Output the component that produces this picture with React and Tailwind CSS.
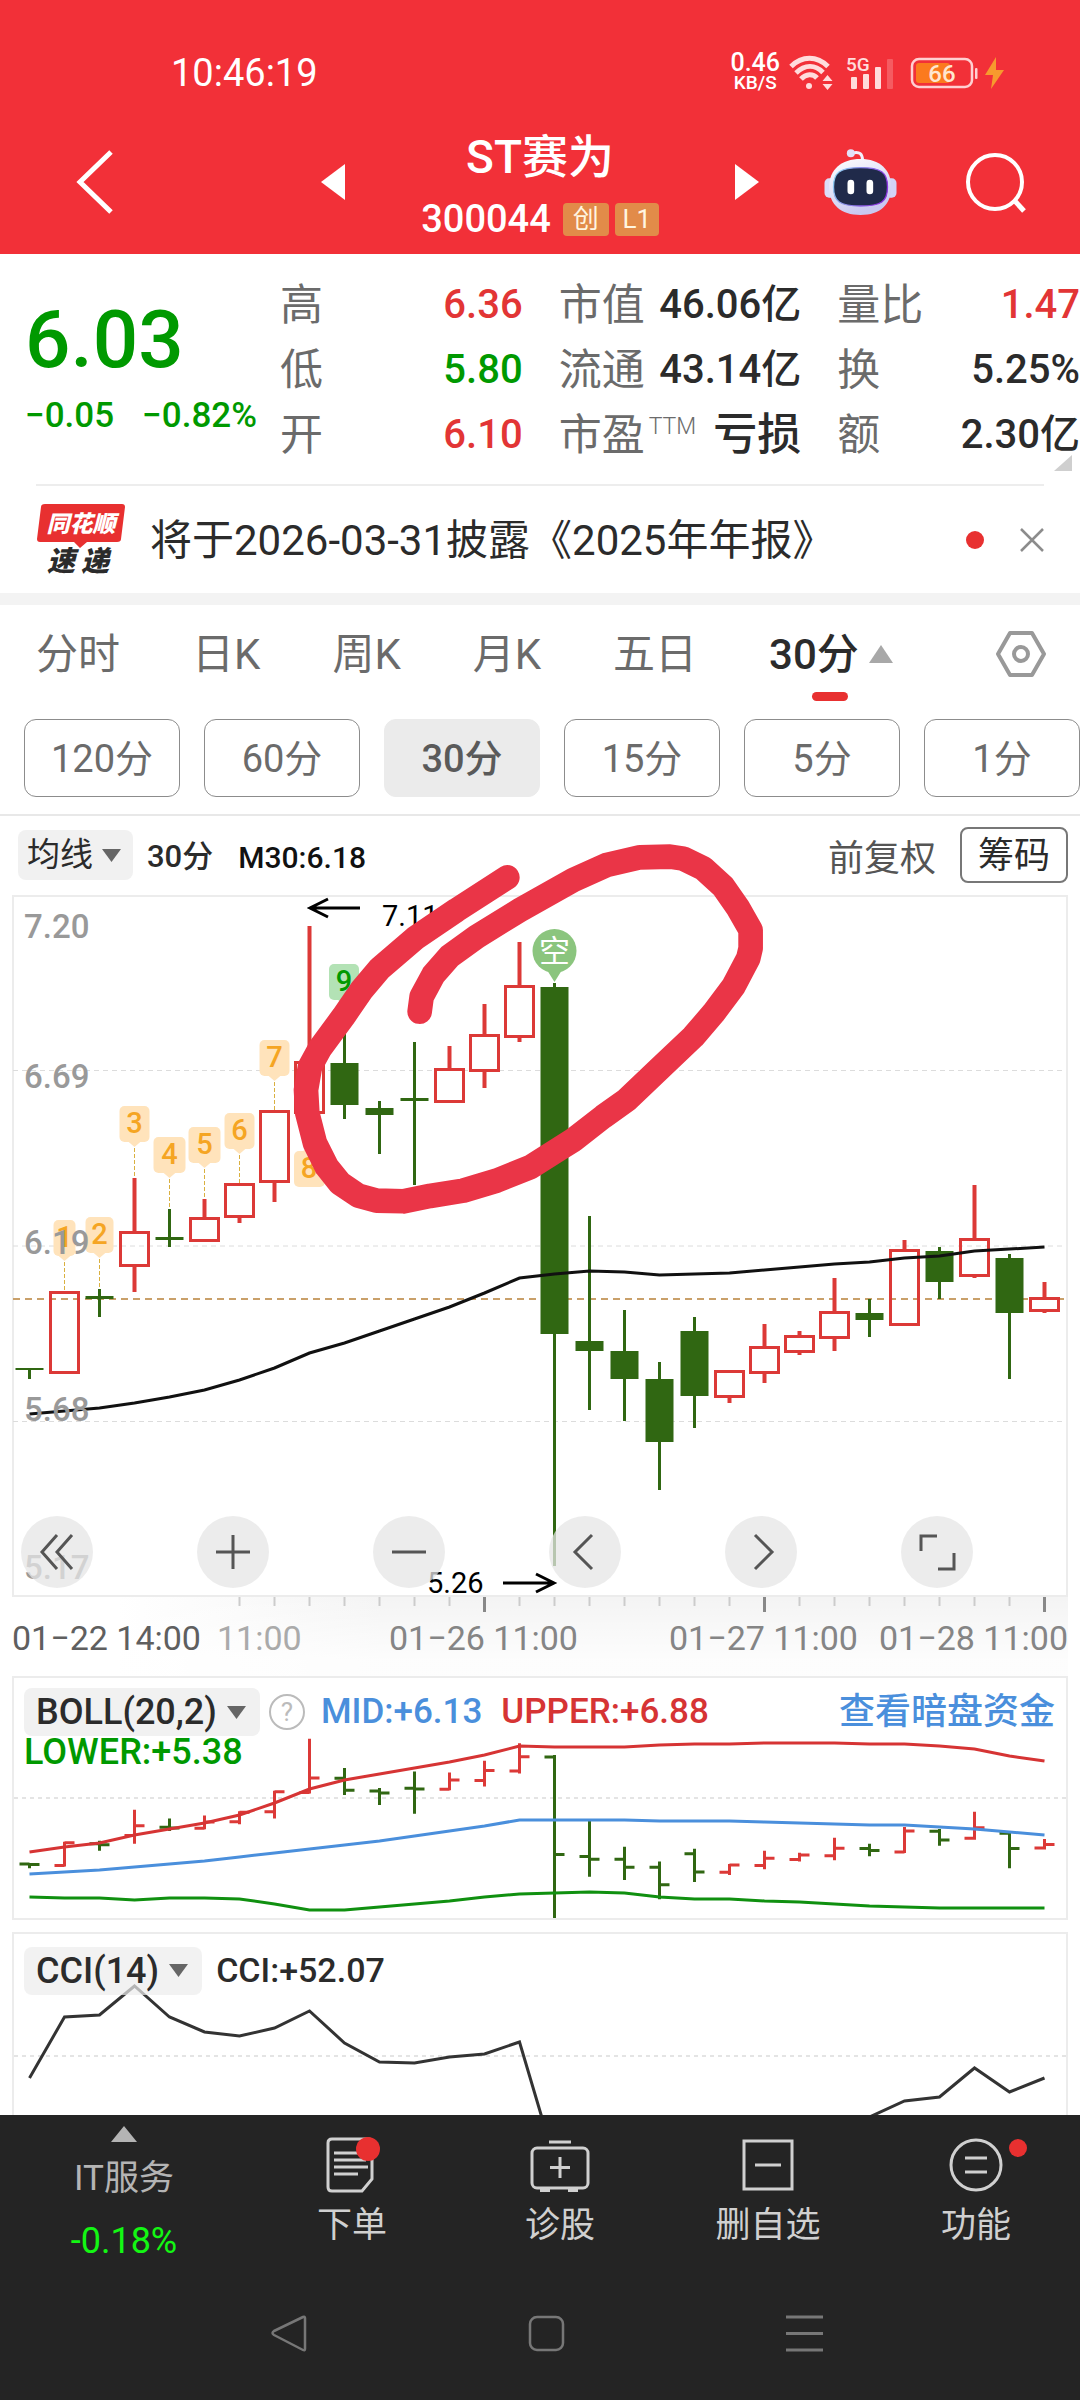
import { clsx } from 'clsx';

const STEP = 35;
const X0 = 29.5;

// [top, bottom, high, low, up] in chart units
const candles = [
  [1368, 1370, 1368, 1379, 0],
  [1292, 1373, 1292, 1373, 1],
  [1296, 1299, 1289, 1317, 0],
  [1232, 1266, 1178, 1292, 1],
  [1237, 1240, 1209, 1247, 0],
  [1218, 1241, 1199, 1241, 1],
  [1184, 1217, 1184, 1223, 1],
  [1111, 1182, 1111, 1202, 1],
  [1062, 1113, 926, 1113, 1],
  [1063, 1105, 1030, 1119, 0],
  [1108, 1115, 1101, 1154, 0],
  [1098, 1101, 1042, 1185, 0],
  [1069, 1102, 1046, 1102, 1],
  [1035, 1071, 1004, 1088, 1],
  [986, 1037, 942, 1042, 1],
  [987, 1334, 983, 1566, 0],
  [1341, 1351, 1216, 1410, 0],
  [1351, 1379, 1310, 1421, 0],
  [1379, 1442, 1362, 1490, 0],
  [1331, 1396, 1317, 1428, 0],
  [1371, 1397, 1371, 1403, 1],
  [1347, 1373, 1324, 1383, 1],
  [1336, 1352, 1331, 1355, 1],
  [1312, 1338, 1278, 1351, 1],
  [1313, 1320, 1299, 1337, 0],
  [1250, 1325, 1240, 1325, 1],
  [1251, 1282, 1247, 1299, 0],
  [1239, 1276, 1185, 1278, 1],
  [1258, 1313, 1254, 1379, 0],
  [1298, 1311, 1282, 1313, 1],
];

const ma30 = [
  1414, 1411, 1408, 1403, 1397, 1390, 1380, 1368, 1353, 1343, 1331, 1319, 1307, 1293, 1278, 1274,
  1271, 1272, 1275, 1274, 1273, 1270, 1267, 1264, 1262, 1258, 1256, 1251, 1249, 1247,
];

const bollUpper = [
  1852, 1847, 1843, 1835, 1829, 1823, 1815, 1803, 1789, 1780, 1774, 1768, 1762, 1755, 1746, 1747,
  1747, 1747, 1745, 1744, 1744, 1743, 1743, 1743, 1744, 1744, 1746, 1749, 1756, 1761,
];
const bollMid = [
  1874, 1872, 1870, 1867, 1864, 1861, 1857, 1853, 1849, 1845, 1841, 1836, 1831, 1826, 1820, 1820,
  1820, 1820, 1821, 1821, 1821, 1822, 1823, 1824, 1825, 1825, 1827, 1829, 1832, 1835,
];
const bollLower = [
  1897, 1898, 1898, 1900, 1898, 1898, 1899, 1904, 1910, 1910, 1907, 1904, 1901, 1897, 1894, 1893,
  1892, 1893, 1897, 1899, 1899, 1901, 1902, 1904, 1906, 1907, 1908, 1908, 1908, 1908,
];
const cci = [
  2078, 2017, 2015, 1986, 2017, 2032, 2036, 2028, 2011, 2043, 2062, 2063, 2057, 2054, 2042, 2160,
  2240, 2240, 2240, 2230, 2210, 2190, 2160, 2135, 2117, 2101, 2097, 2068, 2092, 2078,
];

// [candle index, label, top, width, stem end]
const tags = [
  [1, '1', 1220, 22, 1292],
  [2, '2', 1217, 28, 1289],
  [3, '3', 1106, 30, 1178],
  [4, '4', 1137, 32, 1209],
  [5, '5', 1127, 32, 1199],
  [6, '6', 1113, 30, 1184],
  [7, '7', 1040, 30, 1111],
];

const stats = [
  [
    { label: '高', value: '6.36', color: 'text-[#e23535]' },
    { label: '低', value: '5.80', color: 'text-[#009900]' },
    { label: '开', value: '6.10', color: 'text-[#e23535]' },
  ],
  [
    { label: '市值', value: '46.06亿', color: 'text-[#2b2b2b]' },
    { label: '流通', value: '43.14亿', color: 'text-[#2b2b2b]' },
    { label: '市盈', sup: 'TTM', value: '亏损', color: 'text-[#2b2b2b]' },
  ],
  [
    { label: '量比', value: '1.47', color: 'text-[#e23535]' },
    { label: '换', value: '5.25%', color: 'text-[#2b2b2b]' },
    { label: '额', value: '2.30亿', color: 'text-[#2b2b2b]' },
  ],
];

const tabs = ['分时', '日K', '周K', '月K', '五日', '30分'];
const periods = ['120分', '60分', '30分', '15分', '5分', '1分'];

const xAt = (i) => X0 + i * STEP;
const toPoints = (values) => values.map((y, i) => `${xAt(i)},${y}`).join(' ');
const bollY = (y) => 1757 + (y - 987) * 0.281;

function StatusBar() {
  return (
    <div className="flex h-[110px] items-center justify-between pt-[36px] pr-[74px] pb-0 pl-[171px]">
      <span className="text-[38px] leading-[44px]">10:46:19</span>
      <div className="flex items-center">
        <div className="mr-2 flex flex-col items-center font-medium">
          <span className="text-[25px] leading-[20px]">0.46</span>
          <span className="text-[19px] leading-[20px]">KB/S</span>
        </div>
        <svg className="mr-3 h-[36px] w-[46px]" viewBox="0 0 46 36" fill="none" stroke="#ffdcdc">
          <path d="M3 11.500C14 .5 29 .5 40 11.500" strokeWidth="5" />
          <path d="M8 18C17 9.500 27 9.500 35 17.500" strokeWidth="5" />
          <path d="M13 24C18 18.500 25 18.500 29 23" strokeWidth="5" />
          <circle cx="21" cy="31" r="3" fill="#ffdcdc" stroke="none" />
          <path d="M34.500 26l5-6 5 6zM34.500 29l5 6 5-6z" fill="#ffdcdc" stroke="none" />
        </svg>
        <svg className="mr-4 h-[36px] w-[48px] overflow-visible" viewBox="0 0 48 36" fill="#ffdcdc">
          <text x="0" y="16" fontSize="19" fontWeight="500">5G</text>
          <rect x="5" y="22" width="6" height="12" rx="1" />
          <rect x="17" y="19" width="6" height="15" rx="1" />
          <rect x="29" y="12" width="6" height="22" rx="1" />
          <rect x="41" y="4" width="6" height="30" rx="1" opacity="0.25" />
        </svg>
        <svg className="h-[36px] w-[96px]" viewBox="0 0 96 36">
          <rect x="2" y="4" width="60" height="28" rx="7" fill="none" stroke="#ffd0d2" strokeWidth="2.500" />
          <rect x="6" y="8" width="34" height="20" rx="3" fill="#fb7a1e" />
          <rect x="65" y="13" width="2.500" height="11" rx="1" fill="#ffd0d2" />
          <text x="32" y="27" textAnchor="middle" fontSize="24" fontWeight="500" fill="#ffe6cf">66</text>
          <path d="M86 2L75 20h8l-2 14 13-19h-8z" fill="#f79a2e" />
        </svg>
      </div>
    </div>
  );
}

function RobotIcon() {
  return (
    <svg className="h-[66px] w-[73px]" viewBox="0 0 216 198">
      <defs>
        <linearGradient id="shell" x1="0" y1="0" x2="0.4" y2="1">
          <stop offset="0" stopColor="#ffffff" />
          <stop offset="1" stopColor="#c9c8f0" />
        </linearGradient>
        <linearGradient id="rim" x1="0" y1="0" x2="1" y2="0.3">
          <stop offset="0" stopColor="#8fdcf4" />
          <stop offset="1" stopColor="#8a35e0" />
        </linearGradient>
      </defs>
      <path d="M84 12c22-6 30 4 30 22" fill="none" stroke="#f3f0fc" strokeWidth="9" />
      <circle cx="79" cy="13" r="12" fill="#e3e0f8" />
      <rect x="0" y="88" width="34" height="58" rx="14" fill="#dcdcf8" />
      <rect x="182" y="88" width="34" height="58" rx="14" fill="#d3d3f6" />
      <path d="M108 30c58 0 92 32 92 84s-32 84-92 84-94-32-94-84 36-84 94-84z" fill="url(#shell)" />
      <path d="M108 56c62 0 81 14 81 58s-19 57-81 57-81-13-81-57 19-58 81-58z" fill="#202a4a" stroke="url(#rim)" strokeWidth="4" />
      <rect x="69" y="92" width="20" height="44" rx="10" fill="#fff" />
      <rect x="126" y="92" width="20" height="44" rx="10" fill="#fff" />
    </svg>
  );
}

function Header() {
  return (
    <header className="bg-[#f23038] text-white">
      <StatusBar />
      <div className="grid h-[144px] grid-cols-[1fr_auto_1fr] items-center">
        <div className="flex items-center justify-between pr-[76px] pl-[76px]">
          <button aria-label="返回">
            <svg className="h-[66px] w-[38px]" viewBox="0 0 38 66" fill="none" stroke="#fff" strokeWidth="5">
              <path d="M35 3L4 33l31 30" />
            </svg>
          </button>
          <button aria-label="上一只">
            <svg className="h-[36px] w-[24px]" viewBox="0 0 24 36" fill="#fff"><path d="M24 0v36L0 18z" /></svg>
          </button>
        </div>
        <div className="flex flex-col items-center pt-3">
          <h1 className="text-[46px] leading-[62px] font-medium">ST赛为</h1>
          <div className="flex h-[62px] items-center gap-[6px]">
            <span className="mr-[6px] text-[38px] leading-[44px] font-medium">300044</span>
            <span className="flex h-[33px] w-[46px] items-center justify-center rounded-sm bg-[#e28b49] text-[26px] text-[#fff5e0]">创</span>
            <span className="flex h-[33px] w-[44px] items-center justify-center rounded-sm bg-[#e28b49] text-[26px] text-[#fff5e0]">L1</span>
          </div>
        </div>
        <div className="flex items-center pl-[76px]">
          <button aria-label="下一只">
            <svg className="h-[36px] w-[24px]" viewBox="0 0 24 36" fill="#fff"><path d="M0 0v36l24-18z" /></svg>
          </button>
          <button className="ml-[65px]" aria-label="智能助手"><RobotIcon /></button>
          <button className="ml-[68px]" aria-label="搜索">
            <svg className="h-[62px] w-[62px]" viewBox="0 0 62 62" fill="none" stroke="#fff" strokeWidth="4">
              <circle cx="30" cy="31" r="27" />
              <path d="M49 49l10 11" strokeWidth="5" />
            </svg>
          </button>
        </div>
      </div>
    </header>
  );
}

function Quote() {
  return (
    <section className="relative flex h-[230px] pt-[18px]">
      <div className="w-[280px] shrink-0 pt-[24px] pl-[25px] font-medium text-[#009900]">
        <div className="text-[80px] leading-[88px]">6.03</div>
        <div className="mt-[10px] flex gap-[28px] text-[35px] leading-[44px] whitespace-nowrap">
          <span>−0.05</span>
          <span>−0.82%</span>
        </div>
      </div>
      <div className="grid flex-1 grid-cols-3 gap-x-[36px]">
        {stats.map((col, i) => (
          <dl key={i}>
            {col.map((row) => (
              <div key={row.label} className="flex h-[65px] items-center justify-between whitespace-nowrap">
                <dt className="flex text-[43px] leading-[60px] text-[#6b6b6b]">
                  {row.label}
                  {row.sup && <span className="ml-1 text-[23px] leading-[44px] font-light">{row.sup}</span>}
                </dt>
                <dd className={clsx('leading-[60px] font-medium', row.value === '亏损' ? 'text-[44px]' : 'text-[40px]', row.color)}>
                  {row.value}
                </dd>
              </div>
            ))}
          </dl>
        ))}
      </div>
      <svg className="absolute right-2 bottom-[13px] h-4 w-[18px]" viewBox="0 0 18 16" fill="#cfcfcf"><path d="M18 0v16H0z" /></svg>
    </section>
  );
}

function NewsBar() {
  return (
    <section className="mx-9 flex h-[109px] items-center border-t-2 border-[#ededed]">
      <svg className="h-[76px] w-[90px]" viewBox="0 0 90 76" fontStyle="italic" fontWeight="900">
        <path d="M9 2h77q3 0 3 3l-4 32q0 3-4 3H51l-7 6-6-6H4q-3 0-3-3L5 5q0-3 4-3z" fill="#e83030" />
        <text x="45" y="30" textAnchor="middle" fontSize="23" fill="#fff">同花顺</text>
        <text x="11" y="69" fontSize="28" fill="#2b2b2b">速</text>
        <text x="45" y="69" fontSize="28" fill="#2b2b2b">递</text>
      </svg>
      <p className="ml-6 flex-1 pt-[2px] text-[42px] whitespace-nowrap text-[#2b2b2b]">将于2026-03-31披露《2025年年报》</p>
      <span className="mr-9 size-[18px] rounded-full bg-[#e83030]" />
      <button aria-label="关闭">
        <svg className="size-[24px]" viewBox="0 0 24 24" stroke="#8c8c8c" strokeWidth="2.500"><path d="M1 1l22 22M23 1L1 23" /></svg>
      </button>
    </section>
  );
}

function Tabs() {
  return (
    <nav className="border-t-[12px] border-b-2 border-t-[#f3f3f3] border-b-[#e8e8e8]">
      <div className="flex h-[98px] items-center justify-between pr-[34px] pl-9">
        <div className="flex gap-[72px]">
          {tabs.map((tab) => {
            const active = tab === '30分';
            return (
              <button
                key={tab}
                className={clsx(
                  'relative flex h-[98px] items-center text-[42px] whitespace-nowrap',
                  active ? 'font-medium text-[#2b2b2b]' : 'text-[#6b6b6b]'
                )}
              >
                {tab}
                {active && (
                  <>
                    <svg className="ml-[10px] h-[18px] w-[24px]" viewBox="0 0 24 18" fill="#a8a8a8"><path d="M12 0l12 18H0z" /></svg>
                    <span className="absolute bottom-[2px] left-[43px] h-[9px] w-[36px] rounded-full bg-[#e83030]" />
                  </>
                )}
              </button>
            );
          })}
        </div>
        <button aria-label="设置">
          <svg className="h-[48px] w-[50px]" viewBox="0 0 50 48" fill="none" stroke="#999" strokeWidth="4" strokeLinejoin="round">
            <path d="M14 3h22l12 21-12 21H14L2 24z" />
            <circle cx="25" cy="24" r="7" />
          </svg>
        </button>
      </div>
      <div className="flex gap-6 pt-4 pb-[17px] pl-6">
        {periods.map((p) => (
          <button
            key={p}
            className={clsx(
              'h-[78px] min-w-0 flex-1 basis-0 rounded-xl border pt-[2px] text-[38px]',
              p === '30分' ? 'border-[#ebebeb] bg-[#ebebeb] font-medium text-[#5a5a5a]' : 'border-[#8c8c8c] text-[#6b6b6b]'
            )}
          >
            {p}
          </button>
        ))}
      </div>
    </nav>
  );
}

function Caret() {
  return <svg className="h-[13px] w-[19px]" viewBox="0 0 19 13" fill="#666"><path d="M0 0h19l-9.500 13z" /></svg>;
}

function MaBar() {
  return (
    <div className="flex h-[78px] items-center justify-between pr-3 pl-[18px] whitespace-nowrap">
      <div className="flex items-center">
        <button className="flex h-[50px] items-center gap-[9px] rounded-lg bg-[#f1f1f1] pr-3 pl-[9px] text-[33px] text-[#2b2b2b]">
          均线 <Caret />
        </button>
        <span className="ml-[14px] pt-1 text-[31px] font-medium text-[#2b2b2b]">30分</span>
        <span className="ml-[25px] pt-1 text-[30px] font-medium text-[#111]">M30:6.18</span>
      </div>
      <div className="flex items-center gap-6">
        <span className="pt-2 text-[36px] text-[#555]">前复权</span>
        <button className="h-[56px] w-[108px] rounded-lg border-2 border-[#777] text-[36px] leading-[54px] text-[#2b2b2b]">筹码</button>
      </div>
    </div>
  );
}

function Candle({ data, x }) {
  const [top, bottom, high, low, up] = data;
  if (up) {
    return (
      <g stroke="#dc3937" strokeWidth="3" fill="none">
        <path d={`M${x} ${high}V${top}M${x} ${bottom}V${low}`} strokeWidth="4" />
        <rect x={x - 14} y={top + 0.5} width="28" height={bottom - top - 1} />
      </g>
    );
  }
  return (
    <g fill="#306712">
      <rect x={x - 1.5} y={high} width="3" height={low - high} />
      <rect x={x - 14} y={top} width="28" height={bottom - top} />
    </g>
  );
}

function Tag({ x, y, width, label }) {
  return (
    <g>
      <rect x={x - width / 2} y={y} width={width} height="36" rx="5" fill="#ffe3bb" />
      <path d={`M${x - 7} ${y + 35}h14l-7 6z`} fill="#ffe3bb" />
      <text x={x} y={y + 27} textAnchor="middle" fontSize="29" fontWeight="500" fill="#f5a523">{label}</text>
    </g>
  );
}

const controls = [
  { label: '最左', d: 'M36 19L21 36l15 17M51 19L36 36l15 17' },
  { label: '放大', d: 'M36 19v34M19 36h34' },
  { label: '缩小', d: 'M19 36h34' },
  { label: '左移', d: 'M43 19L26 36l17 17' },
  { label: '右移', d: 'M30 19l17 17-17 17' },
  { label: '全屏', d: 'M20 35V20h16M53 37v16H37' },
];

function KChart() {
  return (
    <section className="relative">
      <svg className="block h-auto w-full overflow-visible" viewBox="0 894 1080 782">
        <defs>
          <linearGradient id="axisX">
            <stop offset="0.1" stopColor="#fff" />
            <stop offset="0.35" stopColor="#f4f4f4" />
          </linearGradient>
          <linearGradient id="axisY" x1="0" x2="0" y1="0" y2="1">
            <stop offset="0" stopColor="#fff" stopOpacity="0" />
            <stop offset="0.8" stopColor="#fff" stopOpacity="0.8" />
          </linearGradient>
        </defs>
        <rect x="12" y="1597" width="1056" height="79" fill="url(#axisX)" />
        <rect x="12" y="1597" width="1056" height="79" fill="url(#axisY)" />
        <rect x="13" y="896" width="1054" height="700" fill="none" stroke="#ececec" strokeWidth="2" />
        {[1070.5, 1246, 1421.5].map((y) => (
          <path key={y} d={`M13 ${y}H1066`} stroke="#dcdcdc" strokeDasharray="5 4" />
        ))}
        <path d="M13 1299H1066" stroke="#c9a06a" strokeWidth="2" strokeDasharray="7 5" />

        {tags.map(([i, label, y, width, end]) => (
          <g key={label}>
            <path d={`M${xAt(i)} ${y + 42}V${end}`} stroke="#d9b040" strokeDasharray="4 2" />
            <Tag x={xAt(i)} y={y} width={width} label={label} />
          </g>
        ))}
        <rect x="294" y="1151" width="31" height="36" rx="5" fill="#ffe3bb" />
        <text x="309" y="1178" textAnchor="middle" fontSize="29" fontWeight="500" fill="#f5a523">8</text>
        <path d="M302 1152h14l-7-6z" fill="#ffe3bb" />
        <rect x="329" y="964" width="30" height="36" rx="5" fill="#b3e2b5" />
        <path d="M337 999h14l-7 6z" fill="#b3e2b5" />
        <text x="344" y="991" textAnchor="middle" fontSize="29" fontWeight="500" fill="#009900">9</text>

        {candles.map((c, i) => <Candle key={i} data={c} x={xAt(i)} />)}
        <polyline points={toPoints(ma30)} fill="none" stroke="#111" strokeWidth="3" />

        <path d="M547 970h15l-7.500 12z" fill="#8bc57e" />
        <circle cx="554.500" cy="951" r="22" fill="#8bc57e" />
        <text x="554.500" y="962" textAnchor="middle" fontSize="31" fill="#fff">空</text>

        <g fontSize="33" fontWeight="500" fill="#999">
          <text x="24" y="938">7.20</text>
          <text x="24" y="1088">6.69</text>
          <text x="24" y="1254">6.19</text>
          <text x="24" y="1421">5.68</text>
          <text x="24" y="1579">5.17</text>
        </g>
        <g fontSize="29" fill="#000">
          <text x="382" y="926">7.11</text>
          <text x="427" y="1593">5.26</text>
        </g>
        <g fill="none" stroke="#000" strokeWidth="3">
          <path d="M360 908h-50M328 899l-18 9 18 9" />
          <path d="M503 1583h50M536 1574l18 9-18 9" />
        </g>

        {candles.map((_, i) => {
          if (i < 6) return null;
          const major = [13, 21, 29].includes(i);
          return (
            <path
              key={i}
              d={`M${xAt(i)} 1597v${major ? 15 : 9}`}
              stroke={major ? '#888' : '#ccc'}
              strokeWidth={major ? 3 : 2}
            />
          );
        })}
        <g fontSize="34" fill="#858585">
          <text x="217" y="1650" fill="#aaa">11:00</text>
          <text x="389" y="1650">01−26 11:00</text>
          <text x="669" y="1650">01−27 11:00</text>
          <text x="1068" y="1650" textAnchor="end">01−28 11:00</text>
          <text x="12" y="1650" fill="#5f5f5f">01−22 14:00</text>
        </g>

        {/* freehand marker */}
        <path
          transform="translate(290 830) scale(0.3333)"
          d="M652 142L500 240L375 325L270 415L215 480L160 560L90 655L60 710L48 780L52 850L75 940L110 1010L150 1060L205 1097L260 1112L340 1114L420 1098L520 1082L620 1052L720 1012L810 955L850 930L940 860L1010 810L1110 715L1210 620L1270 550L1330 470L1375 385L1382 355L1382 300L1345 235L1300 170L1240 115L1180 86L1140 80L1050 82L950 105L850 150L690 240L560 320L480 378L430 435L395 500L389 545"
          fill="none"
          stroke="#ea3547"
          strokeWidth="74"
          strokeLinecap="round"
          strokeLinejoin="round"
        />
      </svg>
      <div className="absolute bottom-[88px] left-[21px] flex gap-[104px]">
        {controls.map((c) => (
          <button key={c.label} aria-label={c.label} className="size-[72px] rounded-full bg-[#e6e6e6]/75">
            <svg viewBox="0 0 72 72" fill="none" stroke="#555" strokeWidth="3"><path d={c.d} /></svg>
          </button>
        ))}
      </div>
    </section>
  );
}

function BollPanel() {
  return (
    <section className="relative mx-3 h-[244px] border-2 border-[#ececec]">
      <svg className="absolute inset-0 h-full w-full" viewBox="14 1678 1052 240" preserveAspectRatio="none" fill="none" strokeWidth="3">
        <path d="M14 1798H1066" stroke="#e4e4e4" strokeWidth="2" strokeDasharray="4 4" />
        {candles.map(([top, bottom, high, low, up], i) => {
          const x = xAt(i);
          const open = bollY(up ? bottom : top);
          const close = bollY(up ? top : bottom);
          return (
            <path
              key={i}
              d={`M${x} ${bollY(high) - 1}V${bollY(low) + 1}M${x - 10} ${open}H${x}M${x} ${close}H${x + 10}`}
              stroke={up ? '#dc3937' : '#306712'}
            />
          );
        })}
        <polyline points={toPoints(bollUpper)} stroke="#d63434" />
        <polyline points={toPoints(bollMid)} stroke="#4a8fdc" />
        <polyline points={toPoints(bollLower)} stroke="#109010" />
      </svg>
      <div className="relative flex items-center pt-[10px] pr-[11px] pl-[10px] text-[35px] leading-[48px] font-medium whitespace-nowrap">
        <button className="flex h-[48px] items-center gap-[10px] rounded-lg bg-[#f1f1f1] pr-[14px] pl-3 text-[36px] text-[#2b2b2b]">
          BOLL(20,2) <Caret />
        </button>
        <button
          aria-label="指标说明"
          className="ml-[9px] size-[36px] rounded-full border-2 border-[#bbb] text-[26px] leading-[32px] font-normal text-[#bbb]"
        >
          ?
        </button>
        <span className="ml-[16px] text-[#4a8fdc]">MID:+6.13</span>
        <span className="ml-[19px] text-[#d63434]">UPPER:+6.88</span>
        <a href="#funds" className="ml-auto text-[36px] text-[#4a8fdc]">查看暗盘资金</a>
      </div>
      <div className="relative pl-[10px] text-[36px] leading-[32px] font-medium text-[#009900]">LOWER:+5.38</div>
    </section>
  );
}

function CciPanel() {
  return (
    <section className="relative mx-3 mt-3 h-[183px] border-2 border-b-0 border-[#ececec]">
      <svg className="absolute inset-0 h-full w-full" viewBox="14 1934 1052 181" preserveAspectRatio="none" fill="none">
        <path d="M14 2056H1066" stroke="#e4e4e4" strokeWidth="2" strokeDasharray="4 4" />
        <polyline points={toPoints(cci)} stroke="#333" strokeWidth="3" />
      </svg>
      <div className="relative flex items-center gap-[14px] pt-[11px] pl-[10px] text-[34px] font-medium text-[#2b2b2b]">
        <button className="flex h-[48px] items-center gap-[10px] rounded-lg bg-[#ececec]/70 pr-[14px] pl-3 text-[36px]">
          CCI(14) <Caret />
        </button>
        <span>CCI:+52.07</span>
      </div>
    </section>
  );
}

const actions = [
  {
    label: '下单',
    icon: (
      <>
        <path d="M10 3h36q4 0 4 4v36L40 55H10q-4 0-4-4V7q0-4 4-4z" />
        <path d="M12 17h26M12 24h32M12 31h34M12 38h24" strokeWidth="3" />
        <circle cx="46" cy="13" r="12" fill="#e83030" stroke="none" />
      </>
    ),
  },
  {
    label: '诊股',
    icon: (
      <>
        <path d="M19 6h22" />
        <rect x="2" y="12" width="56" height="40" rx="5" />
        <path d="M30 21v21M20 31.500h20" />
        <path d="M10 54h10M38 54h10" strokeWidth="4" />
      </>
    ),
  },
  {
    label: '删自选',
    icon: (
      <>
        <rect x="6" y="5" width="48" height="48" />
        <path d="M17 29h26" />
      </>
    ),
  },
  {
    label: '功能',
    icon: (
      <>
        <circle cx="30" cy="29" r="25" />
        <path d="M19 22h22M19 36h22" />
        <circle cx="72" cy="12" r="9" fill="#e83030" stroke="none" />
      </>
    ),
  },
];

function Footer() {
  return (
    <footer className="h-[285px] bg-[#242424]">
      <div className="flex h-[160px] items-start">
        <button className="flex w-[248px] flex-col items-center pt-[11px] text-[#b4b4b4]">
          <svg className="h-4 w-[26px] shrink-0" viewBox="0 0 26 16" fill="#b4b4b4"><path d="M13 0l13 16H0z" /></svg>
          <span className="mt-[10px] text-[35px] leading-[54px]">IT服务</span>
          <span className="mt-2 text-[36px] leading-[54px] text-[#13f713]">-0.18%</span>
        </button>
        {actions.map((a) => (
          <button key={a.label} className="flex flex-1 flex-col items-center pt-[21px] text-[35px] leading-[54px] text-[#d0d0d0]">
            <svg className="mb-[3px] h-[60px] w-[60px] overflow-visible" viewBox="0 0 60 60" fill="none" stroke="#d0d0d0" strokeWidth="3">
              {a.icon}
            </svg>
            {a.label}
          </button>
        ))}
      </div>
      <div className="flex gap-[221px] pt-[40px] pl-[270px]">
        <button aria-label="系统返回">
          <svg className="size-[37px]" viewBox="0 0 37 37" fill="none" stroke="#777" strokeWidth="2.500" strokeLinejoin="round">
            <path d="M35 3v31q0 2-2 1L4 20q-3-2 0-4L33 2q2-1 2 1z" />
          </svg>
        </button>
        <button aria-label="主屏幕">
          <svg className="size-[37px]" viewBox="0 0 37 37" fill="none" stroke="#777" strokeWidth="2.500"><rect x="2" y="2" width="33" height="33" rx="7" /></svg>
        </button>
        <button aria-label="最近任务">
          <svg className="size-[37px]" viewBox="0 0 37 37" stroke="#777" strokeWidth="3"><path d="M0 2h37M0 18.500h37M0 35h37" /></svg>
        </button>
      </div>
    </footer>
  );
}

export default function App() {
  return (
    <div className="w-full overflow-hidden bg-white font-[Roboto,'Noto_Sans_CJK_SC',sans-serif]">
      <Header />
      <Quote />
      <NewsBar />
      <Tabs />
      <MaBar />
      <KChart />
      <BollPanel />
      <CciPanel />
      <Footer />
    </div>
  );
}
